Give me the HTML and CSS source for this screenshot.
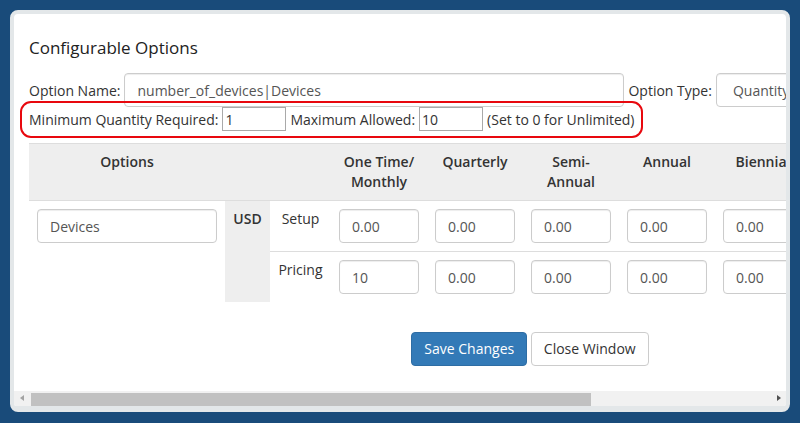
FILE: index.html
```html
<!DOCTYPE html>
<html lang="en">
<head>
    <meta charset="UTF-8">
    <meta name="viewport" content="width=device-width, initial-scale=1.0">
    <title>Configurable Options</title>
    <link rel="stylesheet" href="styles.css">
</head>
<body>
    <div class="window">
        <div class="viewport">
            <div class="content">
                <h2 class="title">Configurable Options</h2>

                <div class="field-row name-row">
                    <label>Option Name:</label>
                    <input type="text" class="form-control name-input" value="number_of_devices|Devices">
                    <label>Option Type:</label>
                    <input type="text" class="form-control type-input" value="Quantity">
                </div>

                <div class="field-row qty-row">
                    <label>Minimum Quantity Required:</label>
                    <input type="text" class="qty-input" value="1">
                    <label>Maximum Allowed:</label>
                    <input type="text" class="qty-input" value="10">
                    <span>(Set to 0 for Unlimited)</span>
                </div>

                <table class="pricing">
                    <colgroup>
                        <col class="col-options">
                        <col class="col-currency">
                        <col class="col-type">
                        <col class="col-cycle">
                        <col class="col-cycle">
                        <col class="col-cycle">
                        <col class="col-cycle">
                        <col class="col-cycle">
                        <col class="col-cycle">
                    </colgroup>
                    <tr>
                        <th>Options</th>
                        <th colspan="2"></th>
                        <th>One Time/ Monthly</th>
                        <th>Quarterly</th>
                        <th>Semi-Annual</th>
                        <th>Annual</th>
                        <th>Biennial</th>
                        <th>Triennial</th>
                    </tr>
                    <tr>
                        <td rowspan="2"><input type="text" class="form-control option-input" value="Devices"></td>
                        <td rowspan="2" class="currency">USD</td>
                        <td class="type">Setup</td>
                        <td><input type="text" class="form-control price" value="0.00"></td>
                        <td><input type="text" class="form-control price" value="0.00"></td>
                        <td><input type="text" class="form-control price" value="0.00"></td>
                        <td><input type="text" class="form-control price" value="0.00"></td>
                        <td><input type="text" class="form-control price" value="0.00"></td>
                        <td><input type="text" class="form-control price" value="0.00"></td>
                    </tr>
                    <tr class="pricing-row">
                        <td class="type">Pricing</td>
                        <td><input type="text" class="form-control price" value="10"></td>
                        <td><input type="text" class="form-control price" value="0.00"></td>
                        <td><input type="text" class="form-control price" value="0.00"></td>
                        <td><input type="text" class="form-control price" value="0.00"></td>
                        <td><input type="text" class="form-control price" value="0.00"></td>
                        <td><input type="text" class="form-control price" value="0.00"></td>
                    </tr>
                </table>

                <div class="actions">
                    <button class="btn btn-primary">Save Changes</button>
                    <button class="btn btn-default">Close Window</button>
                </div>
            </div>

            <!-- marca roja sobre las cantidades -->
            <div class="highlight"></div>
        </div>

        <div class="scrollbar">
            <span class="arrow arrow-left"></span>
            <div class="track"><div class="thumb"></div></div>
            <span class="arrow arrow-right"></span>
        </div>
    </div>
</body>
</html>
```

FILE: styles.css
```css
body {
    margin: 0;
    background-color: #194b7a;
    font-family: "Open Sans", Arial, sans-serif;
    font-size: 14px;
    color: #333;
}
.window { /* ventana blanca con borde gris */
    margin: 10px;
    height: 402px;
    box-sizing: border-box;
    border: 4px solid #e3e7e9;
    border-bottom-width: 6px;
    border-radius: 8px;
    background-color: #fff;
    display: flex;
    flex-direction: column;
    overflow: hidden;
}
.viewport {
    position: relative;
    flex: 1;
    overflow: hidden;
}
.content {
    width: 1032px;
    box-sizing: border-box;
    padding: 24px 15px 0;
}
.title {
    margin: 0 0 15px;
    font-size: 17px;
    font-weight: normal;
    line-height: 20px;
    color: #222;
}
.field-row {
    display: flex;
    align-items: center;
    white-space: nowrap;
}
.name-row {
    height: 34px;
    gap: 4px;
}
.qty-row {
    height: 24px;
    gap: 4px;
    margin-bottom: 12px;
}
input {
    font-family: inherit;
    font-size: 14px;
}
.form-control {
    height: 34px;
    box-sizing: border-box;
    padding: 6px 12px;
    border: 1px solid #ccc;
    border-radius: 4px;
    color: #555;
    background-color: #fff;
    box-shadow: inset 0 1px 1px rgba(0, 0, 0, 0.075);
}
.name-input {
    width: 500px;
}
.type-input {
    width: 160px;
    padding-left: 16px;
}
.qty-input {
    width: 64px;
    height: 24px;
    box-sizing: border-box;
    padding: 1px 2px;
    border: 1px solid #a9a9a9;
    color: #333;
}
.pricing {
    border-collapse: collapse;
    table-layout: fixed;
    width: 878px;
    border-top: 1px solid #ddd;
}
.col-options { width: 196px; }
.col-currency { width: 45px; }
.col-type { width: 61px; }
.col-cycle { width: 96px; }
.pricing th {
    background-color: #eee;
    padding: 8px;
    line-height: 20px;
    font-weight: 600;
    text-align: center;
    vertical-align: top;
    border-bottom: 1px solid #ddd;
}
.pricing td {
    padding: 8px;
    line-height: 20px;
    vertical-align: top;
}
.pricing-row td {
    border-top: 1px solid #ddd;
}
.pricing td.currency {
    background-color: #eee;
    font-weight: 600;
    text-align: center;
}
.pricing td.type {
    text-align: center;
}
.option-input {
    width: 180px;
}
.price {
    width: 80px;
}
.actions {
    margin-top: 30px;
    text-align: center;
}
.btn {
    font-family: inherit;
    font-size: 14px;
    line-height: 20px;
    padding: 6px 12px;
    border: 1px solid transparent;
    border-radius: 4px;
    cursor: pointer;
}
.btn-primary {
    background-color: #337ab7;
    border-color: #2e6da4;
    color: #fff;
}
.btn-default {
    background-color: #fff;
    border-color: #ccc;
    color: #333;
}
.highlight { /* recuadro rojo */
    position: absolute;
    left: 6px;
    top: 87px;
    width: 623px;
    height: 37px;
    box-sizing: border-box;
    border: 2px solid #e8080e;
    border-radius: 11px;
}
.scrollbar {
    height: 15px;
    display: flex;
    background-color: #f1f1f1;
}
.arrow {
    width: 15px;
    position: relative;
}
.arrow::after {
    content: "";
    position: absolute;
    top: 4px;
    border-top: 3.5px solid transparent;
    border-bottom: 3.5px solid transparent;
}
.arrow-left::after {
    left: 6px;
    border-right: 4px solid #a3a3a3;
}
.arrow-right::after {
    left: 6px;
    border-left: 4px solid #505050;
}
.track {
    flex: 1;
}
.thumb {
    width: 560px;
    height: 13px;
    margin: 2px 0 0 2px;
    background-color: #c1c1c1;
}
```
